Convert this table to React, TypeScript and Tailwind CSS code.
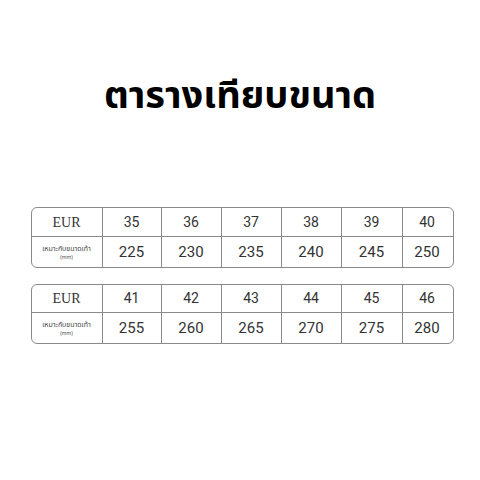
import React from "react";

const rows1 = { eur: ["35", "36", "37", "38", "39", "40"], mm: ["225", "230", "235", "240", "245", "250"] };
const rows2 = { eur: ["41", "42", "43", "44", "45", "46"], mm: ["255", "260", "265", "270", "275", "280"] };
const widths = ["w-[59px]", "w-[60px]", "w-[60px]", "w-[60px]", "w-[61px]", "w-[50px]"];

function SizeTable({ data, topH }: { data: { eur: string[]; mm: string[] }; topH: string }) {
  return (
    <div className="w-[423px] border border-[#8a8a8a] rounded-[6px] flex flex-col text-[#333]">
      <div className={`flex ${topH} border-b border-[#8a8a8a]`}>
        <div className="w-[70px] flex items-center justify-center text-[14px] text-[#333]" style={{ fontFamily: '"Liberation Serif", serif' }}>
          EUR
        </div>
        {data.eur.map((v, i) => (
          <div key={i} className={`${widths[i]} border-l border-[#8a8a8a] flex items-center justify-center text-[14px]`} style={{ fontFamily: 'Roboto, sans-serif' }}>
            {v}
          </div>
        ))}
      </div>
      <div className="flex h-[30px]">
        <div className="w-[70px] flex flex-col items-center justify-center leading-none text-[#444]" style={{ fontFamily: '"Noto Sans", "Noto Sans Thai", sans-serif' }}>
          <span className="text-[7px]">เหมาะกับขนาดเท้า</span>
          <span className="text-[5px] mt-[3px]">(mm)</span>
        </div>
        {data.mm.map((v, i) => (
          <div key={i} className={`${widths[i]} border-l border-[#8a8a8a] flex items-center justify-center text-[15px]`} style={{ fontFamily: 'Roboto, sans-serif' }}>
            {v}
          </div>
        ))}
      </div>
    </div>
  );
}

export default function App() {
  return (
    <div className="w-[480px] h-[480px] bg-white flex flex-col items-center">
      <h1
        className="mt-[69px] text-[38px] font-bold text-black leading-[48px]"
        style={{ fontFamily: '"Noto Sans", "Noto Sans Thai", "DejaVu Sans", sans-serif' }}
      >
        ตารางเทียบขนาด
      </h1>
      <div className="mt-[90px] ml-[4px] flex flex-col gap-[16px]">
        <SizeTable data={rows1} topH="h-[29px]" />
        <SizeTable data={rows2} topH="h-[28px]" />
      </div>
    </div>
  );
}
